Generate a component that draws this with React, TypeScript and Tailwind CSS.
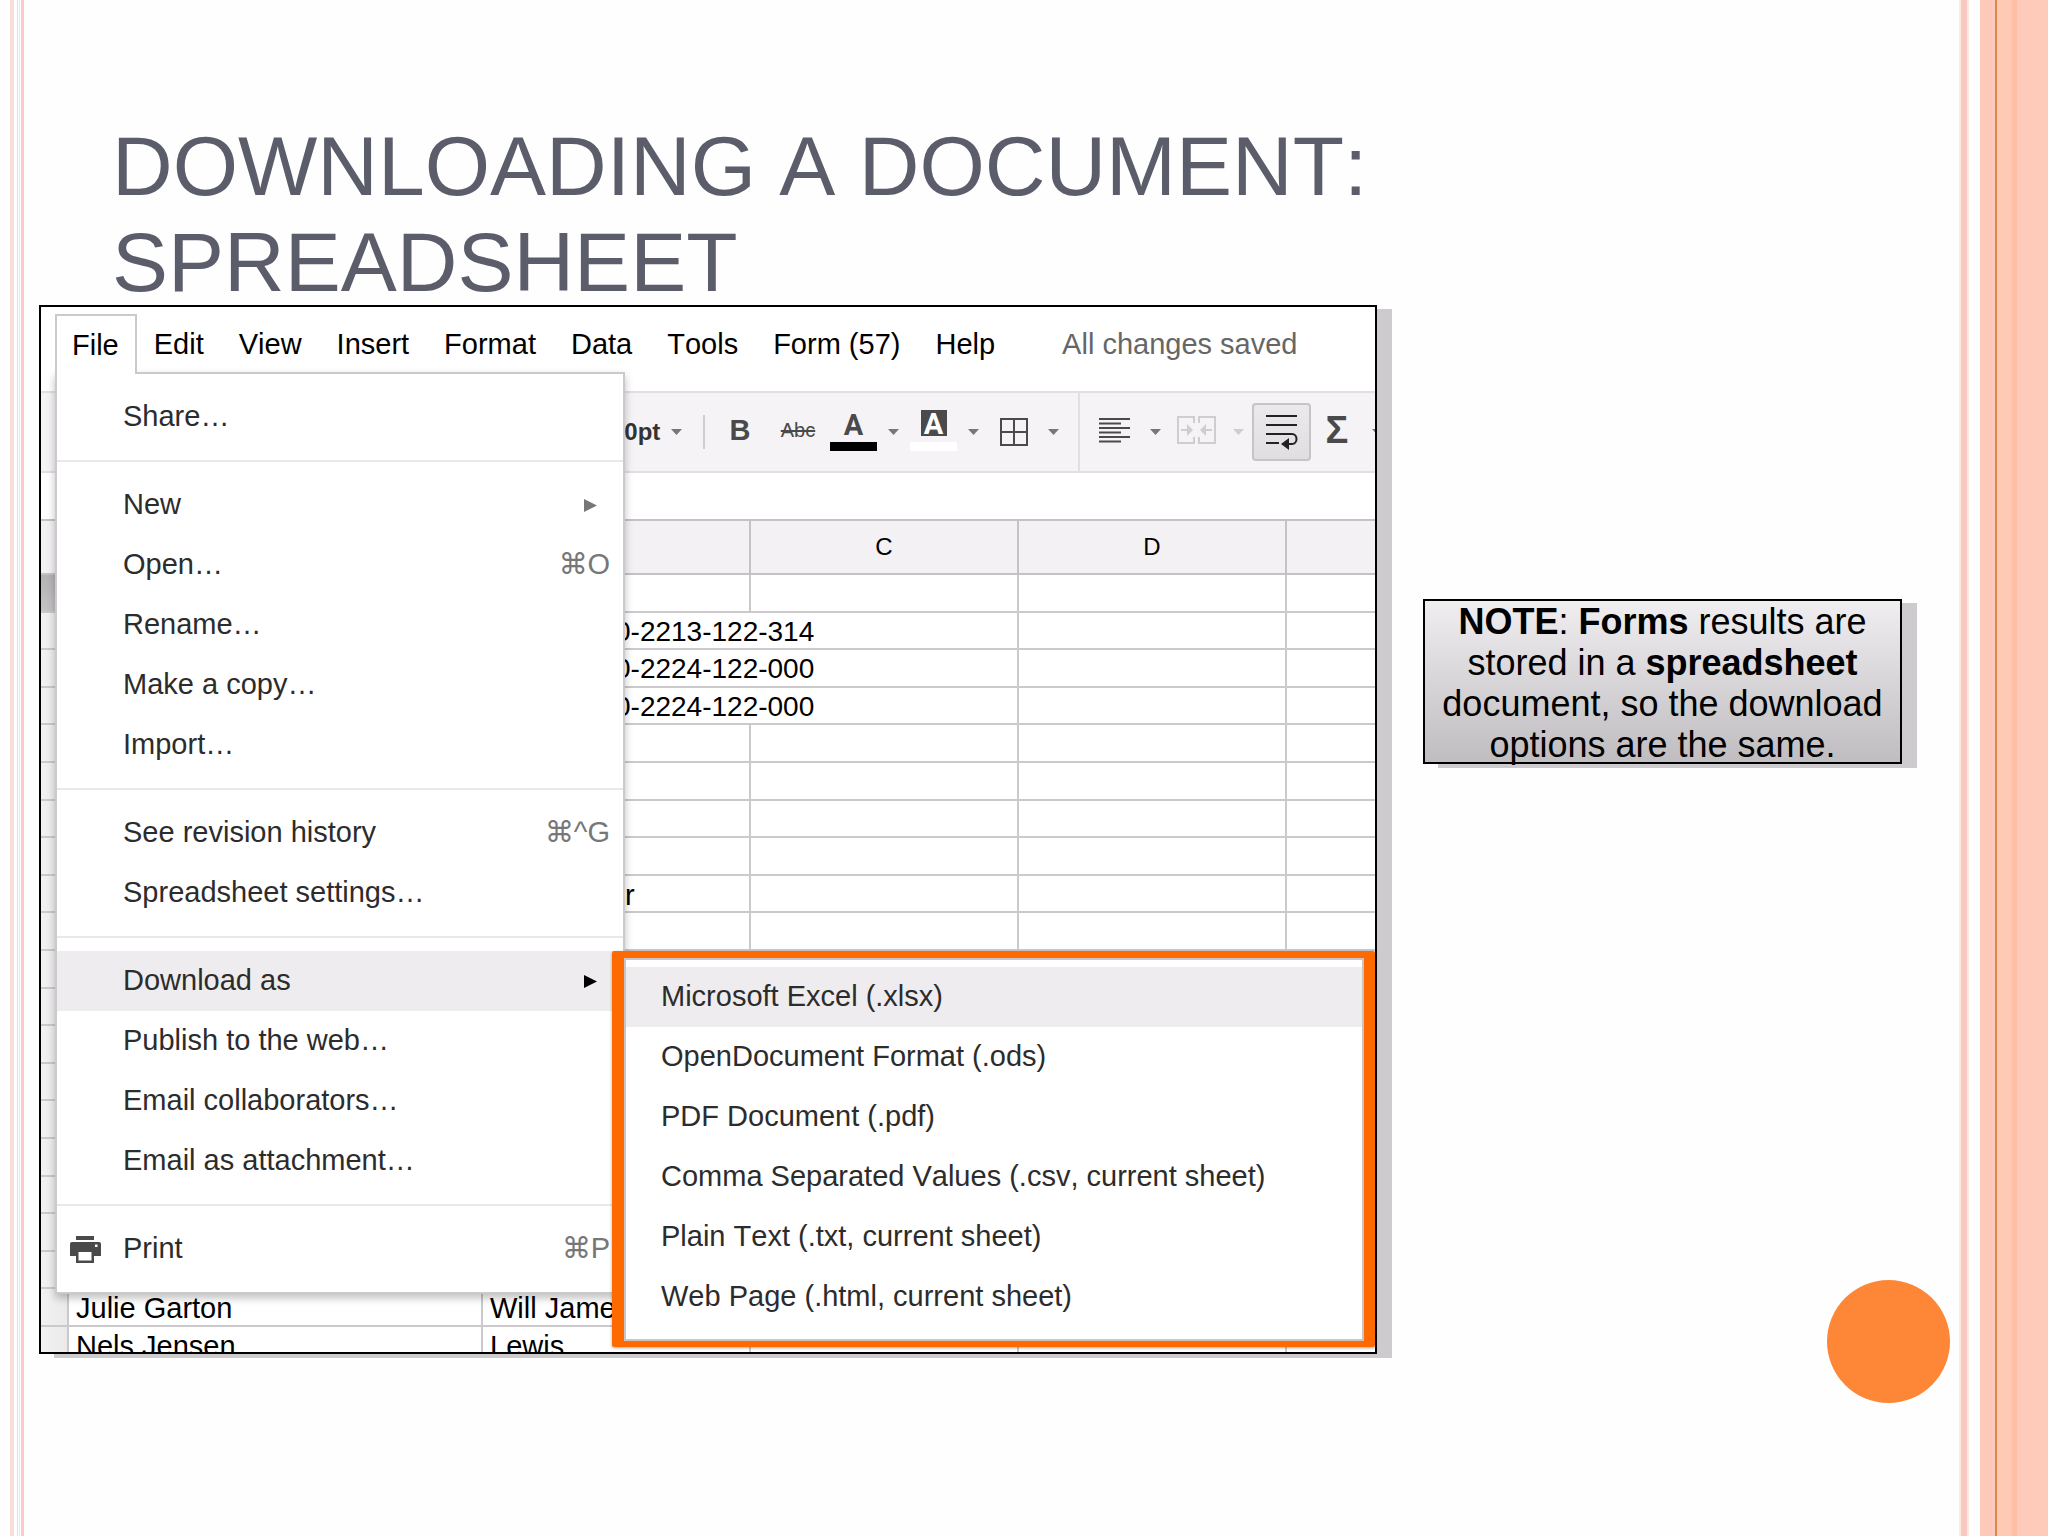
import type { ReactNode } from 'react';
import clsx from 'clsx';

type MenuEntry = {
  label: string;
  shortcut?: string;
  submenu?: boolean;
  active?: boolean;
  icon?: ReactNode;
};

function PrinterIcon() {
  return (
    <svg width="31" height="27" viewBox="0 0 31 27" fill="#4a4a4a">
      <path d="M6 0h18v4H6z" />
      <path d="M2 6h27a2 2 0 0 1 2 2v12H0V8a2 2 0 0 1 2-2z" />
      <path d="M6 14h18v13H6z" />
      <path d="M8.500 16h13v8.500h-13z" fill="white" />
      <path d="M25 8.500h2.500V11H25z" fill="white" />
    </svg>
  );
}

const menuBar = ['Edit', 'View', 'Insert', 'Format', 'Data', 'Tools', 'Form (57)', 'Help'];

const fileMenu: MenuEntry[][] = [
  [{ label: 'Share…' }],
  [
    { label: 'New', submenu: true },
    { label: 'Open…', shortcut: '⌘O' },
    { label: 'Rename…' },
    { label: 'Make a copy…' },
    { label: 'Import…' },
  ],
  [{ label: 'See revision history', shortcut: '⌘^G' }, { label: 'Spreadsheet settings…' }],
  [
    { label: 'Download as', submenu: true, active: true },
    { label: 'Publish to the web…' },
    { label: 'Email collaborators…' },
    { label: 'Email as attachment…' },
  ],
  [{ label: 'Print', shortcut: '⌘P', icon: <PrinterIcon /> }],
];

const downloadFormats = [
  'Microsoft Excel (.xlsx)',
  'OpenDocument Format (.ods)',
  'PDF Document (.pdf)',
  'Comma Separated Values (.csv, current sheet)',
  'Plain Text (.txt, current sheet)',
  'Web Page (.html, current sheet)',
];

// Only the rows with something in them, keyed by row index
const phones: Record<number, string> = {
  1: '0-2213-122-314',
  2: '0-2224-122-000',
  3: '0-2224-122-000',
};
const names: Record<number, [string, string]> = {
  19: ['Julie Garton', 'Will James'],
  20: ['Nels Jensen', 'Lewis'],
};

function Caret({ className = 'w-[33px]', color = 'text-[#777777]' }) {
  return (
    <span className={clsx('flex shrink-0 justify-center', className, color)}>
      <svg width="11" height="6" viewBox="0 0 11 6" fill="currentColor">
        <path d="M0 0h11L5.500 6z" />
      </svg>
    </span>
  );
}

function Tool({ label, className, children }: { label: string; className: string; children: ReactNode }) {
  return (
    <button type="button" aria-label={label} className={clsx('flex shrink-0 items-center justify-center', className)}>
      {children}
    </button>
  );
}

function Toolbar() {
  return (
    <div className="flex h-[82px] items-center overflow-hidden border-y-2 border-[#e1dfe2] bg-[#f5f3f6] pl-[570px] text-[#4a4a4a]">
      <button type="button" className="w-[49px] shrink-0 text-right text-2xl font-bold text-[#333333]">10pt</button>
      <Caret />
      <span className="flex w-[21px] shrink-0 justify-center">
        <span className="h-[34px] w-[2px] bg-[#cfcdd0]" />
      </span>
      <Tool label="Bold" className="w-[52px] pb-1 text-[29px] leading-none font-bold">B</Tool>
      <Tool label="Strikethrough" className="w-[64px] pb-1 text-xl leading-none line-through">Abc</Tool>
      <Tool label="Text color" className="w-[47px] flex-col gap-[2px] pb-1">
        <span className="font-['Roboto',sans-serif] text-[29px] leading-[30px] font-bold">A</span>
        <span className="h-[9px] w-full bg-black" />
      </Tool>
      <Caret />
      <Tool label="Background color" className="w-[47px] flex-col gap-[6px] pb-1">
        <span className="h-[26px] w-[26px] bg-[#4a4a4a] font-['Roboto',sans-serif] text-[29px] leading-[28px] font-bold text-white">A</span>
        <span className="h-[9px] w-full bg-white" />
      </Tool>
      <Caret />
      <Tool label="Borders" className="w-[47px]">
        <svg width="30" height="30" viewBox="0 0 30 30" fill="none" stroke="currentColor" strokeWidth="2">
          <path d="M2 2h26v26H2zM15 2v26M2 15h26" />
        </svg>
      </Tool>
      <Caret />
      <span className="flex w-[18px] shrink-0 justify-center self-stretch">
        <span className="w-[2px] bg-[#e1dfe2]" />
      </span>
      <Tool label="Align" className="w-[53px] pb-1">
        <svg width="31" height="26" viewBox="0 0 31 26" stroke="currentColor" strokeWidth="2">
          <path d="M0 2h31M0 6.400h22M0 11h31M0 15.500h22M0 20h31M0 24.500h22" />
        </svg>
      </Tool>
      <Caret className="w-[28px]" />
      <Tool label="Merge cells" className="w-[55px] pb-1 text-[#cfcdd0]">
        <svg width="41" height="30" viewBox="0 0 41 30" fill="none" stroke="currentColor" strokeWidth="2">
          <path d="M18 8V2H2v26h16v-6M23 8V2h16v26H23v-6M5 15h9M36 15h-9" />
          <path d="M11 9l6 6-6 6zM30 9l-6 6 6 6z" fill="currentColor" stroke="none" />
        </svg>
      </Tool>
      <Caret className="w-[28px]" color="text-[#cfcdd0]" />
      <Tool
        label="Wrap text"
        className="h-[58px] w-[59px] rounded-sm border-2 border-[#c6c4c7] bg-linear-to-b from-[#ebe9ec] to-[#e0dee1] text-[#222222]"
      >
        <svg width="32" height="36" viewBox="0 0 32 36" fill="none" stroke="currentColor" strokeWidth="2">
          <path d="M0 2h31M0 11h31M0 20h26c6 0 6 10 0 10h-5M0 29h13" />
          <path d="M15 30l8-6v12z" fill="currentColor" stroke="none" />
        </svg>
      </Tool>
      <Tool label="Functions" className="w-[52px] pb-1 text-[38px] leading-none font-bold">Σ</Tool>
      <Caret className="w-[28px]" />
    </div>
  );
}

function SheetRow({ index }: { index: number }) {
  const cell = 'border-r-2 border-b-2 border-[#cbc9cc] p-0';
  return (
    <tr className={index % 5 === 1 || index % 5 === 3 ? 'h-[37px]' : 'h-[38px]'}>
      <td
        className={clsx(
          cell,
          index === 0 ? 'bg-linear-to-b from-[#b4b2b4] to-[#c4c2c4]' : 'bg-linear-to-r from-[#f3f2f3] to-[#ebeaeb]'
        )}
      />
      <td className={clsx(cell, 'pt-[2px] pl-[7px]')}>{names[index]?.[0]}</td>
      {phones[index] ? (
        <td colSpan={2} className={clsx(cell, 'pt-[2px] pl-[132px] text-[28px]')}>{phones[index]}</td>
      ) : (
        <>
          <td className={clsx(cell, 'pt-[2px]', index === 8 ? 'pl-[142px]' : 'pl-[7px]')}>
            {index === 8 ? 'r' : names[index]?.[1]}
          </td>
          <td className={cell} />
        </>
      )}
      <td className={cell} />
      <td className="border-b-2 border-[#cbc9cc] p-0" />
    </tr>
  );
}

function Sheet() {
  const head = 'border-t-2 border-r-2 border-b-2 border-[#c4c2c5] p-0 font-normal last:border-r-0';
  return (
    <table className="w-full table-fixed border-separate border-spacing-0 text-[29px] leading-8 whitespace-nowrap text-black">
      <colgroup>
        <col className="w-[28px]" />
        <col className="w-[414px]" />
        <col className="w-[268px]" />
        <col className="w-[268px]" />
        <col className="w-[268px]" />
        <col />
      </colgroup>
      <thead>
        <tr className="h-[56px] bg-[#f3f1f4] text-2xl">
          <th className={head} />
          <th className={head} />
          <th className={head} />
          <th className={head}>C</th>
          <th className={head}>D</th>
          <th className={head} />
        </tr>
      </thead>
      <tbody>
        {Array.from({ length: 21 }, (_, index) => (
          <SheetRow key={index} index={index} />
        ))}
      </tbody>
    </table>
  );
}

function MenuItem({ item }: { item: MenuEntry }) {
  return (
    <button
      type="button"
      className={clsx('flex h-[60px] w-full items-center pr-[13px] text-left', item.active && 'bg-[#eeecee]')}
    >
      <span className="w-[66px] pl-[13px]">{item.icon}</span>
      <span className="flex-1">{item.label}</span>
      {item.shortcut && <span className="text-[#777777]">{item.shortcut}</span>}
      {item.submenu && (
        <svg
          width="13"
          height="13"
          viewBox="0 0 13 13"
          className={clsx('mr-[13px]', item.active ? 'fill-black' : 'fill-[#777777]')}
        >
          <path d="M0 0l13 6.500L0 13z" />
        </svg>
      )}
    </button>
  );
}

function FileMenu() {
  return (
    <div className="absolute top-[65px] left-[14px] w-[570px] border-2 border-[#cbc9cc] bg-white py-[13px] text-[#2c2c2c] shadow-[0_4px_8px_rgba(0,0,0,0.25)]">
      {fileMenu.map((group, index) => (
        <div key={index} className={clsx(index > 0 && 'mt-[13px] border-t-2 border-[#e9e7ea] pt-[13px]')}>
          {group.map((item) => (
            <MenuItem key={item.label} item={item} />
          ))}
        </div>
      ))}
    </div>
  );
}

function DownloadMenu() {
  return (
    <div className="absolute top-[644px] right-0 left-[571px] rounded-xs border-t-[7px] border-r-[11px] border-b-[6px] border-l-[12px] border-[#ff6a00] shadow-[0_1px_3px_rgba(0,0,0,0.35)]">
      <div className="border-2 border-[#cbc4c4] bg-white pt-[7px] pb-3 text-[#2c2c2c]">
        {downloadFormats.map((format, index) => (
          <button
            key={format}
            type="button"
            className={clsx('block h-[60px] w-full pl-[35px] text-left', index === 0 && 'bg-[#eeecee]')}
          >
            {format}
          </button>
        ))}
      </div>
    </div>
  );
}

function Screenshot() {
  return (
    <div className="relative min-w-0 flex-1 border-2 border-black bg-white text-[29px] whitespace-nowrap shadow-[15px_4px_0_#cdcbce] [font-kerning:none]">
      <div className="h-[1045px] overflow-hidden">
        <nav className="flex h-[84px] items-start pt-[7px] leading-[60px] text-black">
          <button
            type="button"
            className="relative z-10 ml-[14px] h-[60px] border-x-2 border-t-2 border-[#cbc9cc] bg-white pr-4 pl-[15px] leading-[56px]"
          >
            File
          </button>
          <div className="flex gap-[35px] pl-[17px]">
            {menuBar.map((item) => (
              <button key={item} type="button">{item}</button>
            ))}
          </div>
          <span className="pl-[67px] text-[#666666]">All changes saved</span>
        </nav>
        <Toolbar />
        <div className="h-[46px]" />
        <Sheet />
      </div>
      <FileMenu />
      <DownloadMenu />
    </div>
  );
}

export default function App() {
  return (
    <div className="flex min-h-screen bg-[#fefefe] font-['Liberation_Sans','DejaVu_Sans',sans-serif]">
      <div className="flex w-6 shrink-0 pl-[10px]">
        <span className="w-1 bg-[#f8ddd9]" />
        <span className="ml-[3px] w-px bg-[#eedcd0]" />
        <span className="ml-px w-px bg-[#f3ead8]" />
        <span className="ml-px w-[3px] bg-[#f8ccc6]" />
      </div>

      <main className="min-w-0 flex-1 pt-[118px] pr-[9px] pl-[15px]">
        <h1 className="-mb-[5px] pl-[73px] text-[84px] leading-[96px] text-[#5b5d6b] [font-kerning:none]">
          DOWNLOADING A DOCUMENT:
          <br />
          SPREADSHEET
        </h1>
        <div className="flex items-start gap-[46px]">
          <Screenshot />
          <aside className="flex w-[527px] shrink-0 flex-col pt-[294px]">
            <p className="h-[165px] w-[479px] border-2 border-black bg-linear-to-b from-[#f0eef1] to-[#bfbdc0] text-center text-4xl leading-[41px] text-black shadow-[15px_4px_0_#cdcbce]">
              <b>NOTE</b>: <b>Forms</b> results are
              <br />
              stored in a <b>spreadsheet</b>
              <br />
              document, so the download
              <br />
              options are the same.
            </p>
            <div className="mt-[516px] h-[123px] w-[123px] self-end rounded-full bg-[#fe8637]" />
          </aside>
        </div>
      </main>

      <div className="flex w-[89px] shrink-0">
        <span className="w-[2px] bg-[#fdeadb]" />
        <span className="w-[6px] bg-[#fac8c3]" />
        <span className="w-[2px] bg-[#fdeadb]" />
        <span className="ml-[11px] w-[15px] bg-[#fdcaba]" />
        <span className="w-[2px] bg-[#d98850]" />
        <span className="w-[15px] bg-[#ffcab3]" />
        <span className="w-[5px] bg-[#ffbfa5]" />
        <span className="flex-1 bg-[#fecab9]" />
      </div>
    </div>
  );
}
